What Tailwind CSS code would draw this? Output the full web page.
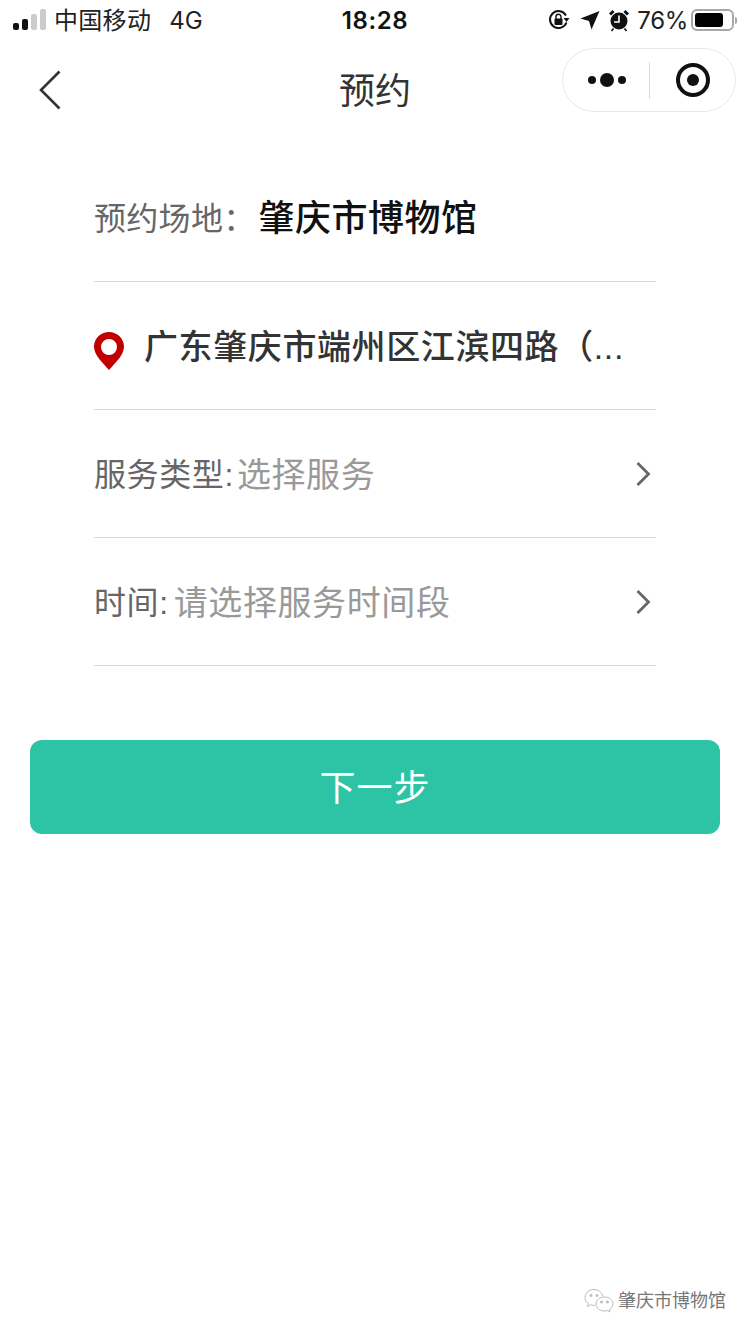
<!doctype html>
<html lang="zh">
<head>
    <meta charset="UTF-8">
    <script src="https://cdn.jsdelivr.net/npm/@tailwindcss/browser@4"></script>
    <title>预约</title>
</head>
<body class="bg-white">
<div class="relative w-[750px] h-[1334px] overflow-hidden bg-white font-['Liberation_Sans','Noto_Sans_CJK_SC',sans-serif]">

    <!-- status bar -->
    <div class="h-[40px] pl-[13px] pr-[13px] flex items-center text-[#222] relative">
        <div class="flex items-end gap-[3px] h-[21px] mt-[-2px]">
            <span class="w-[6px] h-[7px] rounded-[2px] bg-[#111]"></span>
            <span class="w-[6px] h-[11px] rounded-[2px] bg-[#111]"></span>
            <span class="w-[6px] h-[16px] rounded-[2px] bg-[#ccc]"></span>
            <span class="w-[6px] h-[21px] rounded-[2px] bg-[#ccc]"></span>
        </div>
        <span class="ml-[8px] mt-[2px] text-[24px] leading-none tracking-[0.3px]">中国移动</span>
        <span class="ml-[18px] mt-[2px] text-[24px] leading-none font-['Inter',sans-serif]">4G</span>
        <span class="absolute left-0 right-0 mt-[2px] text-center text-[24px] font-semibold leading-none tracking-[0.6px] text-[#111] font-['Inter',sans-serif] pointer-events-none">18:28</span>
        <div class="ml-auto flex items-center">
            <svg width="22" height="22" viewBox="0 0 22 22" fill="none">
                <path d="M18.500 13.500A8.500 8.500 0 1 1 18 6.500" stroke="#111" stroke-width="2"/>
                <path d="M15.500 9h6l-3 4z" fill="#111"/>
                <rect x="6.500" y="9.500" width="8" height="6.500" rx="1" fill="#111"/>
                <path d="M8 10V7.800a2.500 2.500 0 0 1 5 0V10" stroke="#111" stroke-width="1.400"/>
            </svg>
            <svg class="ml-[10px]" width="20" height="20" viewBox="0 0 20 20"><path d="M19.500 1 11.500 19.500 9 11 .5 8.500z" fill="#111"/></svg>
            <svg class="ml-[8px]" width="22" height="24" viewBox="0 0 22 24">
                <circle cx="11" cy="13" r="8.500" fill="#111"/>
                <path d="M11 7.500V14H6" stroke="#fff" stroke-width="1.600" fill="none"/>
                <path d="M2 6.500 5.500 3M20 6.500 16.500 3" stroke="#111" stroke-width="3"/>
                <path d="M5.500 20.500l-2 2.500M16.500 20.500l2 2.500" stroke="#111" stroke-width="1.600"/>
            </svg>
            <span class="ml-[7px] mt-[2px] text-[24px] leading-none font-['Inter',sans-serif] tracking-[-0.3px]">76%</span>
            <div class="ml-[3px] w-[43px] h-[22px] rounded-[6px] border-[2px] border-[#a8a8a8] p-[2px]">
                <div class="w-[28px] h-full rounded-[3px] bg-black"></div>
            </div>
            <span class="ml-[1px] w-[2px] h-[7px] rounded-r-[2px] bg-[#a8a8a8]"></span>
        </div>
    </div>

    <!-- nav bar -->
    <div class="h-[100px] relative flex items-center justify-center">
        <svg class="absolute left-[39px] top-[30px]" width="23" height="40" viewBox="0 0 23 40" fill="none">
            <path d="M20.500 1.500 2 20l18.500 18.500" stroke="#333" stroke-width="2.600"/>
        </svg>
        <span class="mt-[4px] text-[36px] leading-none text-[#333]">预约</span>
        <div class="absolute left-[562px] top-[8px] w-[174px] h-[64px] rounded-full border border-[#e8e8e8] flex items-center">
            <div class="w-[86px] pl-[2px] flex items-center justify-center gap-[4px]">
                <span class="w-[8px] h-[8px] rounded-full bg-[#111]"></span>
                <span class="w-[14px] h-[14px] rounded-full bg-[#111]"></span>
                <span class="w-[8px] h-[8px] rounded-full bg-[#111]"></span>
            </div>
            <div class="w-px h-[37px] bg-[#ddd]"></div>
            <div class="flex-1 flex items-center justify-center">
                <div class="w-[34px] h-[34px] rounded-full border-[4px] border-[#111] flex items-center justify-center">
                    <span class="w-[12px] h-[12px] rounded-full bg-[#111]"></span>
                </div>
            </div>
        </div>
    </div>

    <!-- form -->
    <div class="mx-[94px] mt-[14px]">
        <div class="h-[128px] border-b border-[#d9d9d9] flex items-center">
            <span class="mt-[3px] text-[32px] leading-none text-[#666] tracking-[0.3px]">预约场地：</span>
            <span class="ml-[3px] mt-[3px] text-[36px] leading-none font-medium text-[#111] tracking-[0.5px]">肇庆市博物馆</span>
        </div>
        <div class="h-[128px] border-b border-[#d9d9d9] flex items-center">
            <svg width="30" height="38" viewBox="0 0 30 38" class="mt-[10px]">
                <path fill-rule="evenodd" d="M15 0C6.700 0 0 6.500 0 14.700 0 23 9 31 15 38c6-7 15-15 15-23.300C30 6.500 23.300 0 15 0zm0 7a8 8 0 1 1 0 16 8 8 0 0 1 0-16z" fill="#c00000"/>
            </svg>
            <span class="ml-[20px] mt-[3px] text-[34px] leading-none font-medium text-[#333] tracking-[0.6px] whitespace-nowrap">广东肇庆市端州区江滨四路（...</span>
        </div>
        <div class="h-[128px] border-b border-[#d9d9d9] flex items-center">
            <span class="mt-[3px] text-[32px] leading-none text-[#666] tracking-[0.6px]">服务类型:</span>
            <span class="ml-[3px] mt-[3px] text-[34px] leading-none text-[#999] tracking-[0.6px]">选择服务</span>
            <svg class="ml-auto mr-[5px]" width="16" height="26" viewBox="0 0 16 26" fill="none">
                <path d="M2.500 2 13.500 13 2.500 24" stroke="#666" stroke-width="2.800"/>
            </svg>
        </div>
        <div class="h-[128px] border-b border-[#d9d9d9] flex items-center">
            <span class="mt-[3px] text-[32px] leading-none text-[#666] tracking-[0.6px]">时间:</span>
            <span class="ml-[5px] mt-[3px] text-[34px] leading-none text-[#999] tracking-[0.6px]">请选择服务时间段</span>
            <svg class="ml-auto mr-[5px]" width="16" height="26" viewBox="0 0 16 26" fill="none">
                <path d="M2.500 2 13.500 13 2.500 24" stroke="#666" stroke-width="2.800"/>
            </svg>
        </div>
    </div>

    <!-- button -->
    <div class="mx-[30px] mt-[74px] h-[94px] rounded-[12px] bg-[#2dc4a5] flex items-center justify-center">
        <span class="mt-[4px] text-[36px] leading-none text-white tracking-[1px]">下一步</span>
    </div>

    <!-- watermark -->
    <div class="absolute left-[584px] top-[1288px] flex items-center">
        <svg width="30" height="26" viewBox="0 0 30 26" fill="none" stroke="#bbb" stroke-width="1">
            <path d="M19 8.500C18 4 14 1.500 10 1.500 5 1.500 1 5 1 9.500c0 2.500 1.300 4.500 3.300 6l-.8 3 3.200-1.700c1.500.5 2.800.7 4.300.6"/>
            <path d="M29 16c0-4-3.800-7-8.500-7S12 12 12 16s3.800 7 8.500 7c1 0 2-.2 3-.5l2.500 1.500-.6-2.500C27.500 20.500 29 18.500 29 16z"/>
            <circle cx="7" cy="7.500" r="1" fill="#bbb"/>
            <circle cx="13" cy="7.500" r="1" fill="#bbb"/>
            <circle cx="17.500" cy="14" r="1" fill="#bbb"/>
            <circle cx="23.500" cy="14" r="1" fill="#bbb"/>
        </svg>
        <span class="ml-[4px] text-[18px] leading-none text-[#777]">肇庆市博物馆</span>
    </div>
</div>
</body>
</html>
